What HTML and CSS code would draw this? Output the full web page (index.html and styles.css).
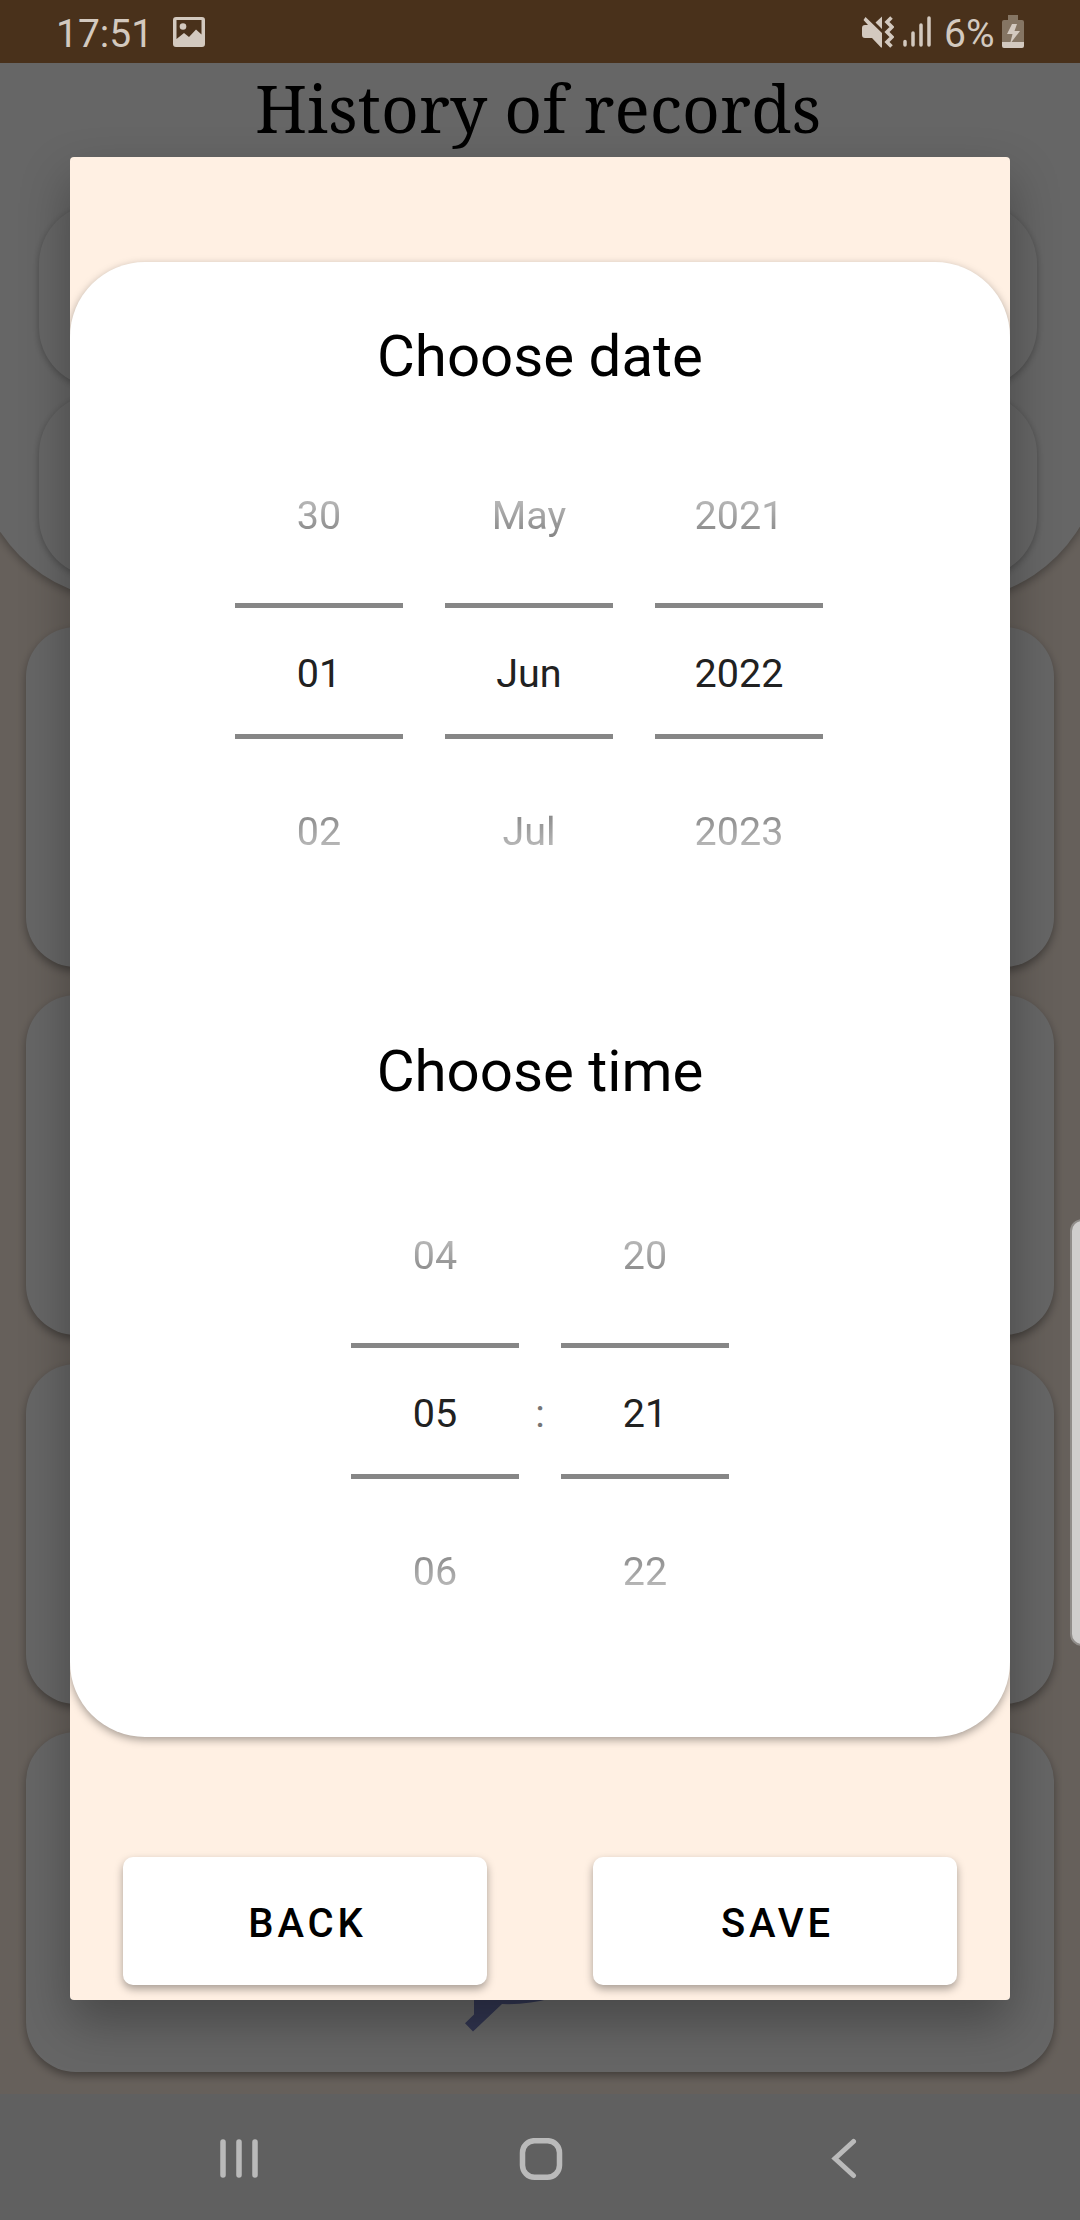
FILE: index.html
```html
<!DOCTYPE html>
<html lang="en">
<head>
<meta charset="utf-8">
<title>History of records</title>
<link rel="stylesheet" href="styles.css">
</head>
<body>
<div class="screen">
  <header class="status">
    <span class="clock">17:51</span>
    <svg class="photo" width="32" height="30" viewBox="0 0 32 30"><path fill-rule="evenodd" d="M3 0H29Q32 0 32 3V27Q32 30 29 30H3Q0 30 0 27V3Q0 0 3 0ZM3.500 3V22L11 16L16 20L23 12.500L28.500 17.500V3Z"/><circle cx="10" cy="9.500" r="3.300"/></svg>
    <svg class="sound" width="32" height="32" viewBox="0 0 32 32"><path d="M3.500 1L20 17V31.500H19L10 22H3Q0 22 0 19V12Q0 9 3 9H6L1.500 4ZM20 .5V13L13.500 6.500Z"/><path class="wave" d="M29.500 1.500L25 6L30 11L25 16L30 21L25 26L29.500 30.500"/></svg>
    <svg class="signal" width="28" height="31" viewBox="0 0 28 31"><path d="M2 25.500V29M10 17V29M18 9V29M26 2V29"/></svg>
    <span class="percent">6%</span>
    <svg class="battery" width="22" height="33" viewBox="0 0 22 33"><path class="cell" d="M6 0H16V5H20Q22 5 22 7V27H0V7Q0 5 2 5H6Z"/><path d="M0 27H22V31Q22 33 20 33H2Q0 33 0 31ZM10 9H15L12.500 16H18L8 29L10.500 19H5Z"/></svg>
  </header>

  <main class="page">
    <section class="top-panel">
      <h1 class="title">History of records</h1>
      <div class="filter"></div>
      <div class="filter"></div>
    </section>
    <section class="records">
      <article class="record"></article>
      <article class="record"></article>
      <article class="record"></article>
      <article class="record">
        <svg class="record-art" width="100" height="60" viewBox="0 0 100 60"><path d="M14 0V42.500L5 51.300L13 59.500L42 32Q68 33 92 26V0Z"/></svg>
      </article>
    </section>
  </main>

  <nav class="navbar">
    <svg class="recents" width="38" height="42" viewBox="0 0 38 42"><path d="M3 4V37M19 4V37M35 4V37"/></svg>
    <svg class="home" width="44" height="44" viewBox="0 0 44 44"><rect x="3.500" y="2.700" width="37" height="36.600" rx="12"/></svg>
    <svg class="back" width="26" height="42" viewBox="0 0 26 42"><path d="M22.500 3.500L4 20.500L22.500 37.500"/></svg>
  </nav>

  <div class="scrim">
    <div class="dialog">
      <div class="sheet">
        <h2 class="heading">Choose date</h2>
        <div class="pickers">
          <div class="picker"><div class="prev">30</div><div class="current">01</div><div class="next">02</div></div>
          <div class="picker"><div class="prev">May</div><div class="current">Jun</div><div class="next">Jul</div></div>
          <div class="picker"><div class="prev">2021</div><div class="current">2022</div><div class="next">2023</div></div>
        </div>
        <h2 class="heading">Choose time</h2>
        <div class="pickers time">
          <div class="picker"><div class="prev">04</div><div class="current">05</div><div class="next">06</div></div>
          <div class="colon">:</div>
          <div class="picker"><div class="prev">20</div><div class="current">21</div><div class="next">22</div></div>
        </div>
      </div>
      <div class="actions">
        <button class="button">BACK</button>
        <button class="button">SAVE</button>
      </div>
    </div>
  </div>
  <div class="edge-handle"></div>
</div>
</body>
</html>
```
FILE: styles.css
```css
* { box-sizing: border-box; }
body { margin: 0; font-family: Roboto, sans-serif; }
svg { display: block; flex: none; }

.screen {
  position: relative;
  width: 1080px;
  height: 2220px;
  overflow: hidden;
  display: flex;
  flex-direction: column;
  background: #fff0e3;
}

/* status bar */
.status {
  position: relative;
  z-index: 3;
  flex: none;
  height: 63px;
  padding-left: 56px;
  display: flex;
  align-items: flex-start;
  background: #49311b;
  color: #d3c9bf;
  fill: #d3c9bf;
  font-size: 39px;
  line-height: 46px;
}
.clock { width: 117px; padding-top: 11px; }
.photo { margin-top: 17px; }
.sound { margin: 16px 0 0 657px; }
.wave { fill: none; stroke: #d3c9bf; stroke-width: 3.6; }
.signal { margin: 16px 0 0 9px; fill: none; stroke: #d3c9bf; stroke-width: 3.5; stroke-linecap: round; }
.percent { width: 58px; padding-top: 11px; margin-left: 13px; white-space: nowrap; }
.battery { margin-top: 15px; }
.cell { fill: #857563; }

/* page under the dialog */
.page { flex: 1; display: flex; flex-direction: column; }
.top-panel {
  flex: none;
  height: 537px;
  margin: 0 -21px 0 -24px;
  padding: 0 64px 0 63px;
  background: #fff;
  border-radius: 0 0 150px 150px;
  box-shadow: 0 3px 8px rgba(0, 0, 0, .3);
}
.title {
  margin: 0 0 7px;
  height: 134px;
  font: normal 65.8px/89px "Noto Serif", "DejaVu Serif Condensed", "DejaVu Serif", serif;
  font-stretch: condensed;
  text-align: center;
}
.filter {
  height: 183px;
  margin-bottom: 7px;
  border-radius: 60px;
  background: #fff;
  box-shadow: 0 2px 7px rgba(0, 0, 0, .28);
}
.records {
  display: flex;
  flex-direction: column;
  gap: 28.3px;
  padding: 27px 26px 0;
}
.record {
  flex: none;
  height: 340px;
  border-radius: 50px;
  background: #fff;
  box-shadow: 0 4px 9px rgba(0, 0, 0, .35);
}
.record-art { margin: 240px 0 0 434px; fill: #7a84c8; }

/* navigation bar */
.navbar {
  position: relative;
  z-index: 3;
  flex: none;
  height: 126px;
  display: flex;
  align-items: flex-start;
  padding-left: 220px;
  background: #606060;
  fill: none;
  stroke: #bababa;
  stroke-width: 5.5;
  stroke-linecap: round;
}
.recents { margin-top: 44px; }
.home { margin: 44px 0 0 261px; }
.back { margin: 44px 0 0 268px; stroke-width: 5; }

/* dialog laid over the page */
.scrim {
  position: absolute;
  inset: 0;
  z-index: 2;
  padding: 157px 70px 220px;
  background: rgba(0, 0, 0, .6);
}
.dialog {
  height: 1843px;
  padding-top: 105px;
  border-radius: 4px;
  background: #fff0e3;
  box-shadow: 0 22px 50px rgba(0, 0, 0, .3);
}
.sheet {
  height: 1475px;
  padding-top: 50px;
  border-radius: 75px;
  background: #fff;
  box-shadow: 0 3px 8px rgba(0, 0, 0, .35);
  clip-path: inset(-10px 0 -20px);
}
.heading {
  margin: 0;
  height: 90px;
  font-size: 58.2px;
  font-weight: 400;
  line-height: 88px;
  text-align: center;
}
.pickers {
  display: flex;
  gap: 42px;
  padding: 26px 0 0 165px;
  height: 625px;
  font-size: 39.5px;
  color: #212121;
  text-align: center;
}
.time { padding: 51px 0 0 281px; gap: 0; }
.picker { width: 168px; }
.prev {
  height: 175px;
  line-height: 175px;
  -webkit-mask-image: linear-gradient(transparent 20px, #000 182px);
  mask-image: linear-gradient(transparent 20px, #000 182px);
}
.current {
  height: 136px;
  padding-top: 3px;
  line-height: 126px;
  border: solid #868686;
  border-width: 5px 0;
}
.next {
  height: 185px;
  line-height: 185px;
  -webkit-mask-image: linear-gradient(#000, transparent 158px);
  mask-image: linear-gradient(#000, transparent 158px);
}
.colon {
  width: 42px;
  padding-top: 180px;
  line-height: 131px;
  color: #757575;
}
.actions {
  display: flex;
  gap: 106px;
  padding: 120px 53px 0;
}
.button {
  width: 364px;
  height: 128px;
  padding: 4px 0 0 5px;
  border: 0;
  border-radius: 10px;
  background: #fff;
  box-shadow: 0 4px 8px rgba(0, 0, 0, .35);
  font: 500 40px Roboto, sans-serif;
  letter-spacing: 3.9px;
  color: #000;
}

/* handle of the system edge panel */
.edge-handle {
  position: absolute;
  z-index: 4;
  left: 1070px;
  top: 1219px;
  width: 24px;
  height: 427px;
  border: 2px solid #908d8a;
  border-radius: 13px;
  background: #cfcecd;
}
```
